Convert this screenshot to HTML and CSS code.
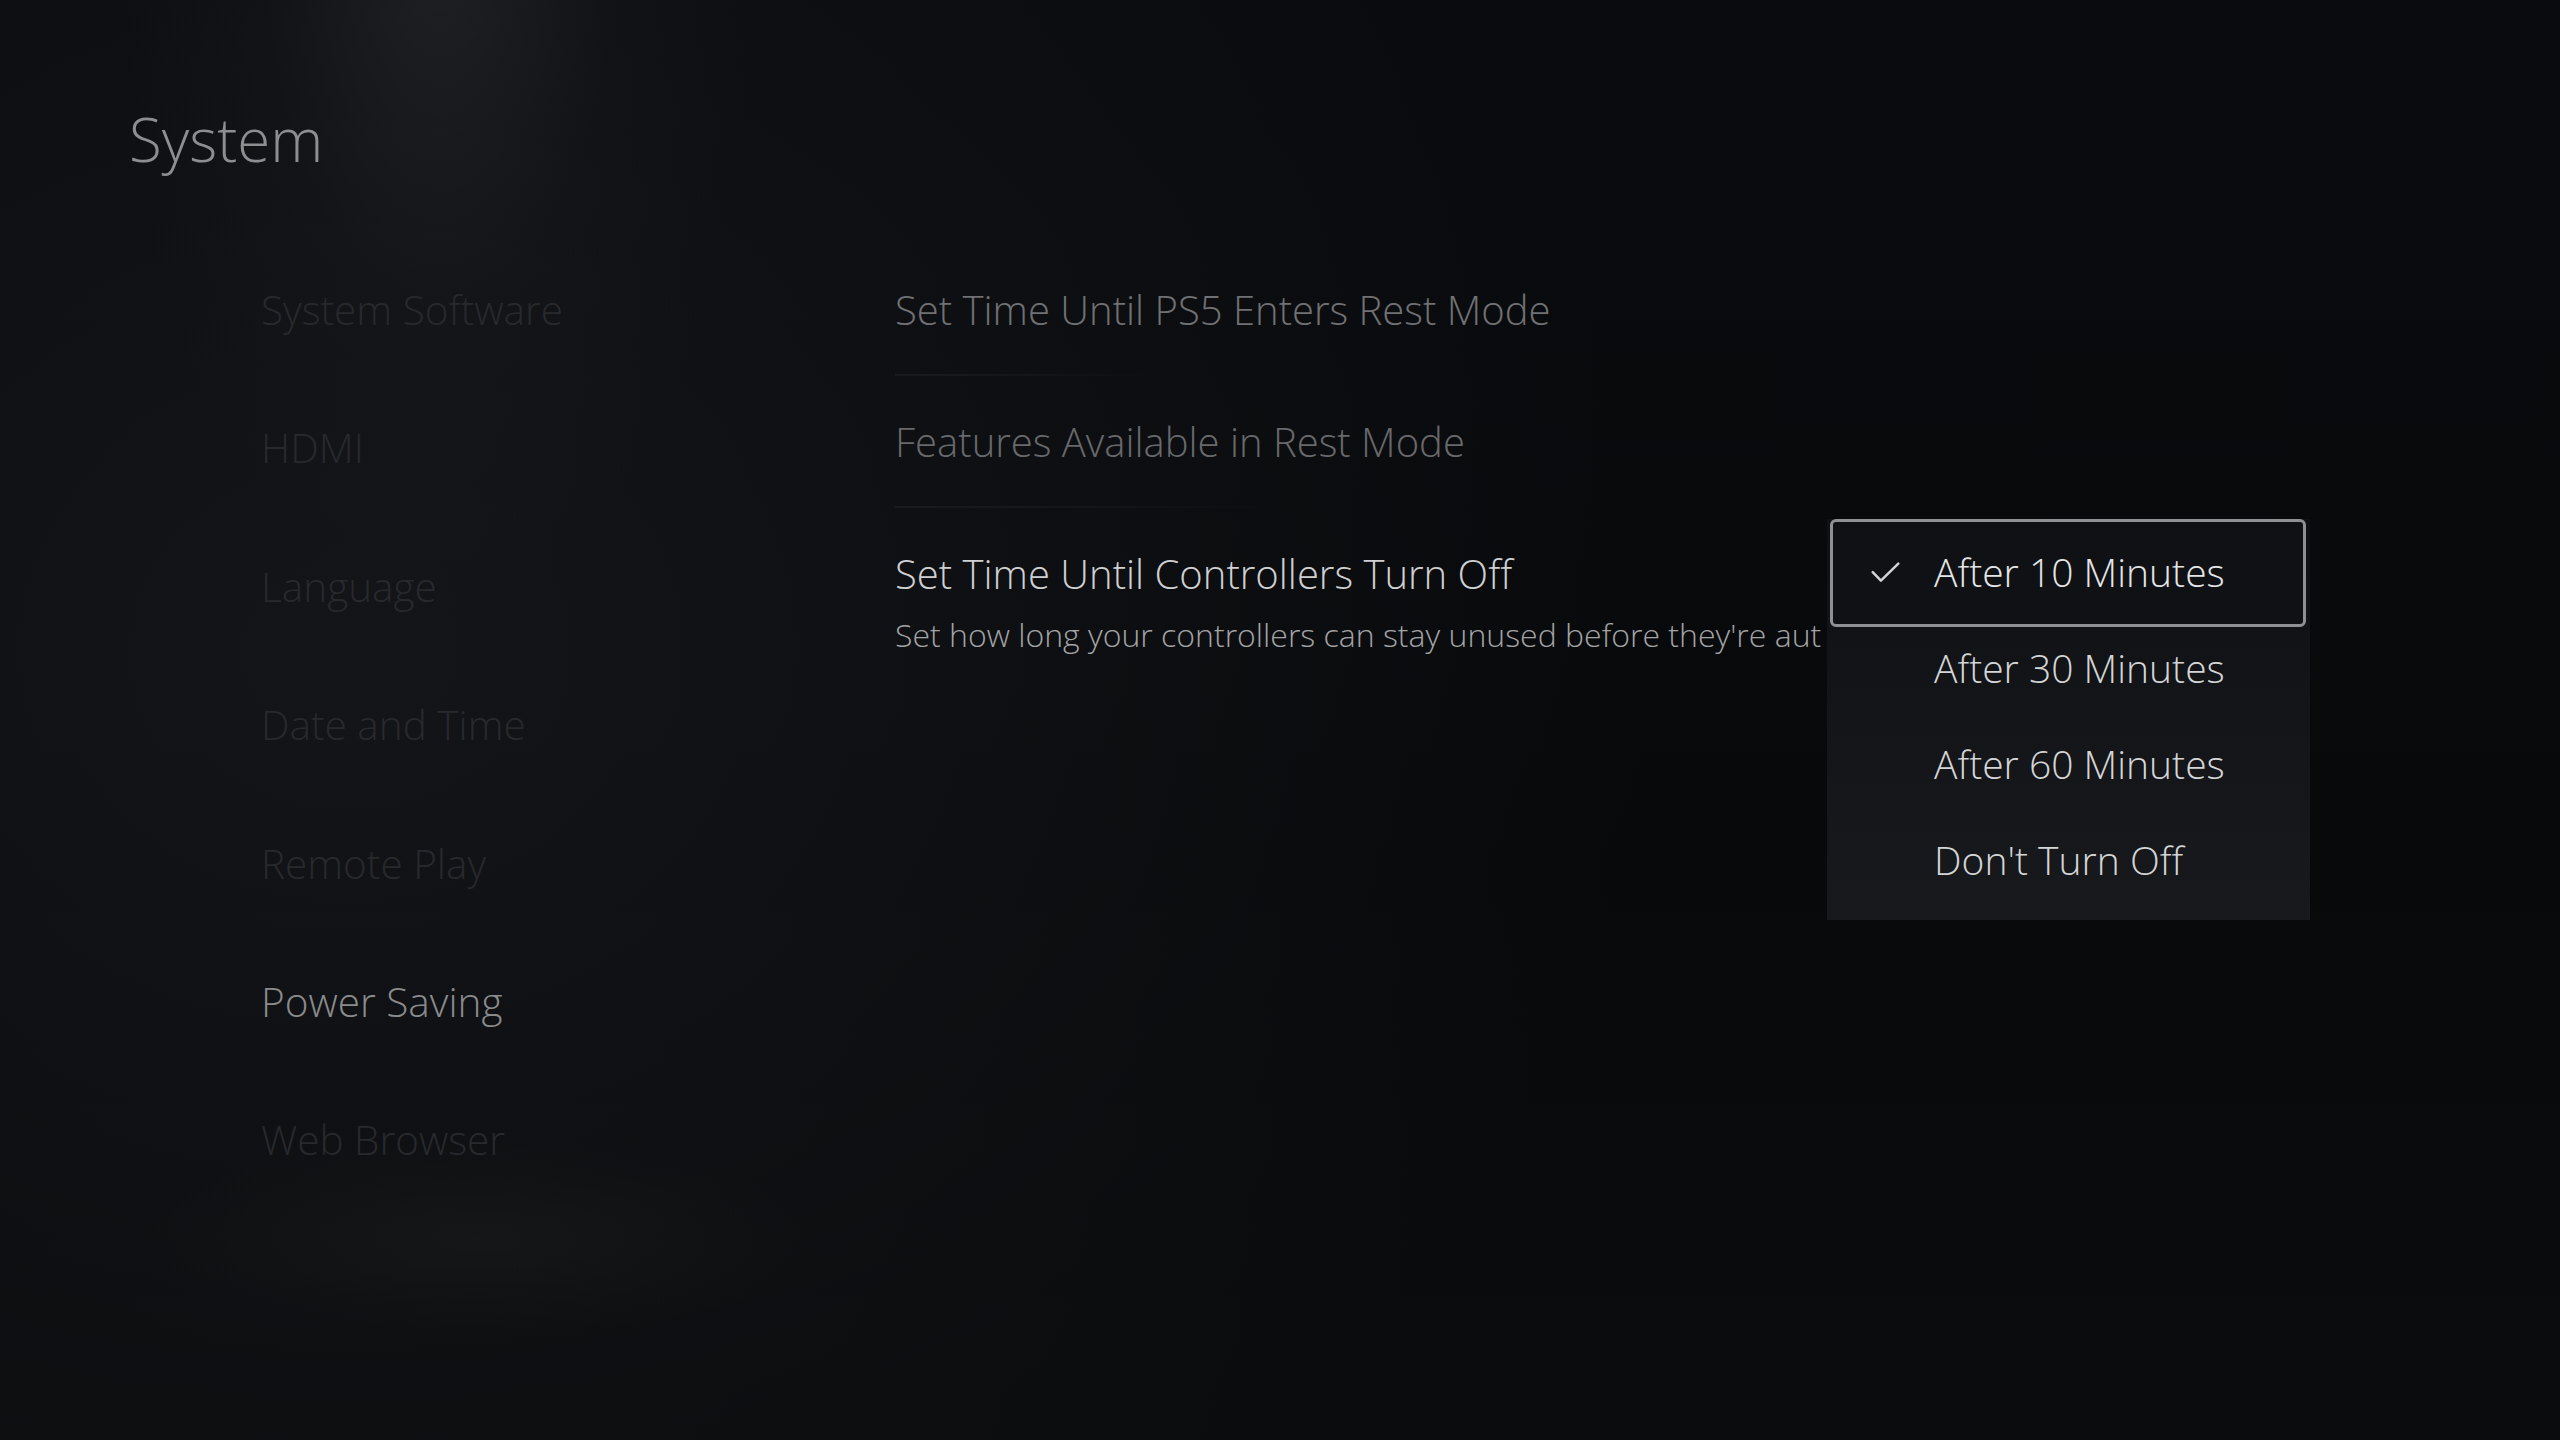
FILE: index.html
```html
<!DOCTYPE html>
<html lang="en">
<head>
<meta charset="utf-8">
<title>System</title>
<link rel="stylesheet" href="styles.css">
</head>
<body>
<div class="screen">
  <h1 class="title">System</h1>
  <div class="content">
    <ul class="nav">
      <li class="nav-item">System Software</li>
      <li class="nav-item">HDMI</li>
      <li class="nav-item">Language</li>
      <li class="nav-item">Date and Time</li>
      <li class="nav-item">Remote Play</li>
      <li class="nav-item nav-item--active">Power Saving</li>
      <li class="nav-item">Web Browser</li>
    </ul>
    <div class="settings">
      <div class="setting">
        <div class="setting-label">Set Time Until PS5 Enters Rest Mode</div>
        <div class="divider divider--short"></div>
      </div>
      <div class="setting">
        <div class="setting-label setting-label--dimmer">Features Available in Rest Mode</div>
        <div class="divider"></div>
      </div>
      <div class="setting setting--focused">
        <div class="setting-label">Set Time Until Controllers Turn Off</div>
        <div class="setting-desc">Set how long your controllers can stay unused before they're aut</div>
      </div>
    </div>
  </div>

  <div class="dropdown">
    <div class="option option--selected">
      <span class="check">
        <svg viewBox="0 0 30 22" width="29" height="21"><path d="M1.6 10.6 L10.2 19.6 L28.4 1.6" fill="none" stroke="currentColor" stroke-width="2.6" stroke-linecap="round" stroke-linejoin="round"/></svg>
      </span>
      <span class="option-text">After 10 Minutes</span>
    </div>
    <div class="option">
      <span class="check"></span>
      <span class="option-text">After 30 Minutes</span>
    </div>
    <div class="option">
      <span class="check"></span>
      <span class="option-text">After 60 Minutes</span>
    </div>
    <div class="option">
      <span class="check"></span>
      <span class="option-text">Don't Turn Off</span>
    </div>
  </div>
</div>
</body>
</html>
```
FILE: styles.css
```css
html, body {
  margin: 0;
  padding: 0;
}

body {
  width: 2560px;
  height: 1440px;
  overflow: hidden;
  font-family: "Open Sans", "Noto Sans", "Liberation Sans", sans-serif;
  font-weight: 300;
  background-color: #08090b;
  background-image:
    radial-gradient(ellipse 320px 680px at 440px -60px, rgba(58, 60, 64, 0.38), rgba(36, 38, 42, 0.15) 55%, rgba(0, 0, 0, 0) 100%),
    radial-gradient(ellipse 340px 100px at 480px 1240px, rgba(40, 39, 36, 0.28), rgba(0, 0, 0, 0) 100%),
    radial-gradient(ellipse 1300px 1100px at 350px 650px, rgba(22, 24, 28, 0.8), rgba(0, 0, 0, 0) 100%),
    linear-gradient(180deg, #0a0b0e 0%, #08090b 60%, #0b0c0e 100%);
}

.screen {
  position: relative;
  box-sizing: border-box;
  height: 1440px;
  padding: 108px 0 0 129px;
}

.title {
  margin: 0;
  font-size: 60px;
  line-height: 62px;
  font-weight: 300;
  color: #8d8e90;
}

.content {
  display: flex;
  margin-left: 132px;
}

/* Left category navigation */
.nav {
  list-style: none;
  margin: 0;
  padding: 71px 0 0;
  width: 634px;
  flex: none;
}

.nav-item {
  font-size: 40.5px;
  line-height: 138.4px;
  height: 138.4px;
  color: #27292d;
  white-space: nowrap;
}

.nav-item--active {
  color: #8a8b8d;
}

/* Settings list */
.settings {
  padding-top: 114px;
  flex: 1;
  min-width: 0;
}

.setting-label {
  font-size: 40px;
  line-height: 52px;
  color: #707174;
  white-space: nowrap;
}

.setting-label--dimmer {
  color: #68696c;
}

.divider {
  height: 2px;
  margin: 38px 0 40px;
  width: 380px;
  background: linear-gradient(90deg, rgba(26, 28, 32, 0.9) 0%, rgba(22, 24, 28, 0.6) 60%, rgba(0, 0, 0, 0) 100%);
}

.divider--short {
  width: 260px;
}

.setting--focused .setting-label {
  color: #cfd0d1;
}

.setting-desc {
  margin-top: 14px;
  font-size: 32px;
  line-height: 42px;
  color: #a3a4a6;
  white-space: nowrap;
}

/* Drop-down options menu */
.dropdown {
  position: absolute;
  left: 1827px;
  top: 519px;
  width: 483px;
  height: 401px;
  padding-top: 5px;
  box-sizing: border-box;
  background: linear-gradient(180deg, #0f1013 0%, #131518 50%, #17191c 100%);
}

.option {
  position: relative;
  display: flex;
  align-items: center;
  height: 96px;
  padding-left: 44px;
  color: #d4d5d6;
}

.option--selected {
  color: #e4e5e6;
}

.option--selected::before {
  content: "";
  position: absolute;
  top: -5px;
  bottom: -7px;
  left: 3px;
  right: 4px;
  border: 3px solid #8e9094;
  border-radius: 6px;
  background: #101114;
  z-index: 0;
}

.check {
  position: relative;
  z-index: 1;
  width: 29px;
  height: 21px;
  margin-right: 34px;
  flex: none;
  color: #d2d3d4;
}

.check svg {
  display: block;
}

.option-text {
  position: relative;
  z-index: 1;
  font-size: 39px;
  line-height: 52px;
  white-space: nowrap;
}
```
